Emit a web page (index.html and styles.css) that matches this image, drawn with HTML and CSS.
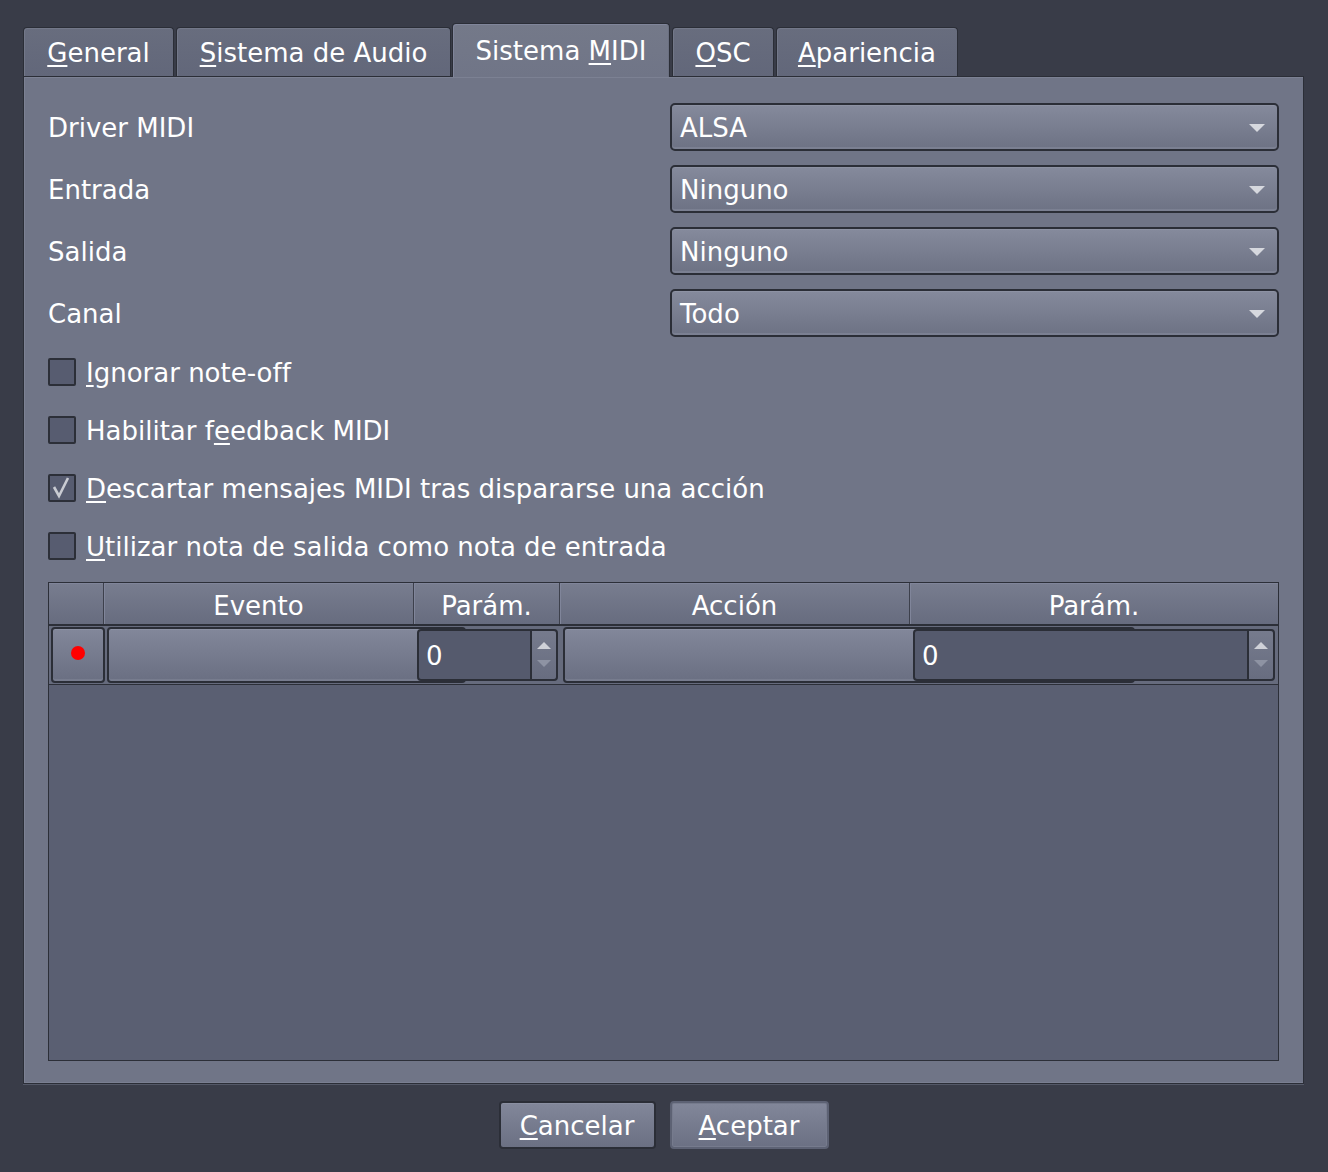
FILE: index.html
```html
<!DOCTYPE html>
<html lang="es">
<head>
<meta charset="utf-8">
<title>Preferencias</title>
<link rel="stylesheet" href="styles.css">
</head>
<body>
<div class="dialog">
  <div class="tabbar">
    <div class="tab tab-general"><span><u>G</u>eneral</span></div>
    <div class="tab tab-audio"><span><u>S</u>istema de Audio</span></div>
    <div class="tab tab-midi active"><span>Sistema <u>M</u>IDI</span></div>
    <div class="tab tab-osc"><span><u>O</u>SC</span></div>
    <div class="tab tab-apar"><span><u>A</u>pariencia</span></div>
  </div>
  <div class="panel">
    <div class="field"><span class="label">Driver MIDI</span><div class="combo"><span>ALSA</span><i class="arrow"></i></div></div>
    <div class="field"><span class="label">Entrada</span><div class="combo"><span>Ninguno</span><i class="arrow"></i></div></div>
    <div class="field"><span class="label">Salida</span><div class="combo"><span>Ninguno</span><i class="arrow"></i></div></div>
    <div class="field"><span class="label">Canal</span><div class="combo"><span>Todo</span><i class="arrow"></i></div></div>

    <div class="check first"><span class="box"></span><span class="ctext"><u>I</u>gnorar note-off</span></div>
    <div class="check"><span class="box"></span><span class="ctext">Habilitar f<u>e</u>edback MIDI</span></div>
    <div class="check"><span class="box"><svg width="24" height="24" viewBox="0 0 24 24"><polyline points="4,11 9,20 18,2" fill="none" stroke="#c9cbd2" stroke-width="2.6" stroke-linejoin="miter"/></svg></span><span class="ctext"><u>D</u>escartar mensajes MIDI tras dispararse una acción</span></div>
    <div class="check"><span class="box"></span><span class="ctext"><u>U</u>tilizar nota de salida como nota de entrada</span></div>

    <div class="table">
      <div class="thead">
        <div class="th th-first"></div>
        <div class="th">Evento</div>
        <div class="th">Parám.</div>
        <div class="th">Acción</div>
        <div class="th">Parám.</div>
      </div>
      <div class="trow">
        <div class="btn rec"><span class="dot"></span></div>
        <div class="btn evento"></div>
        <div class="spin spin-a"><span class="val">0</span><span class="spinbtns"><i class="up"></i><i class="down"></i></span></div>
        <div class="btn accion"></div>
        <div class="spin spin-b"><span class="val">0</span><span class="spinbtns"><i class="up"></i><i class="down"></i></span></div>
      </div>
    </div>
  </div>
  <div class="buttons">
    <div class="pbtn cancel"><span><u>C</u>ancelar</span></div>
    <div class="pbtn accept"><span><u>A</u>ceptar</span></div>
  </div>
</div>
</body>
</html>
```

FILE: styles.css
```css
* { box-sizing: border-box; }
html, body { margin: 0; }
body {
  background: #393c48;
  font-family: "DejaVu Sans", "Noto Sans", sans-serif;
  font-size: 26px;
  color: #ffffff;
  width: 1328px;
  height: 1172px;
  overflow: hidden;
}
u {
  text-decoration: underline;
  text-decoration-thickness: 2px;
  text-underline-offset: 3px;
}
.dialog { padding: 23px 24px 0 23px; }

/* tabs */
.tabbar {
  display: flex;
  align-items: flex-end;
  height: 53px;
  position: relative;
  z-index: 2;
}
.tab {
  height: 49px;
  border: 1px solid #2b2e37;
  border-bottom: none;
  border-radius: 4px 4px 0 0;
  background: linear-gradient(#686d7e, #62677a);
  box-shadow: inset 1px 1px 0 #737889;
  display: flex;
  align-items: center;
  justify-content: center;
  padding-top: 2px;
  line-height: 1;
}
.tab-general { width: 151px; }
.tab-audio { width: 275px; margin-left: 2px; }
.tab-midi { width: 218px; margin-left: 1px; }
.tab-osc { width: 102px; margin-left: 2px; }
.tab-apar { width: 182px; margin-left: 2px; }
.tab.active {
  height: 54px;
  margin-bottom: -1px;
  padding-top: 0;
  padding-bottom: 0;
  background: linear-gradient(#747989, #707587);
  box-shadow: inset 1px 1px 0 #80859a, inset -1px 0 0 #6a6f80;
}

/* panel */
.panel {
  position: relative;
  z-index: 1;
  border: 1px solid #2b2e37;
  background: #707587;
  box-shadow: inset 1px 1px 0 #7c8193, inset 0 -1px 0 #7a7f91, 0 1px 0 #545867;
  padding: 26px 24px 22px 24px;
  display: flex;
  flex-direction: column;
  gap: 14px;
}
.field {
  display: grid;
  grid-template-columns: 1fr 609px;
  align-items: center;
  height: 48px;
}
.label { padding-top: 2px; }
.combo {
  height: 48px;
  border: 2px solid #2b2e37;
  border-radius: 5px;
  background: linear-gradient(#858a9c, #6d7284);
  box-shadow: inset 0 1px 0 #8d92a3, inset 0 -2px 0 #7b8092;
  display: flex;
  align-items: center;
  padding: 2px 12px 0 8px;
  justify-content: space-between;
}
.arrow {
  width: 0;
  height: 0;
  border-left: 8px solid transparent;
  border-right: 8px solid transparent;
  border-top: 8px solid #d6d8de;
  margin-top: -1px;
}

/* checkboxes */
.check {
  height: 44px;
  display: flex;
  align-items: center;
  gap: 10px;
}
.check.first { margin-top: -1px; }
.ctext { padding-top: 2px; }
.box {
  width: 28px;
  height: 28px;
  border: 2px solid #2c2f38;
  border-radius: 2px;
  background: #575c70;
  display: flex;
  align-items: center;
  justify-content: center;
  flex: none;
}
.box svg { display: block; }

/* table */
.table {
  height: 479px;
  border: 1px solid #2c2f38;
  background: #5a5f72;
}
.thead {
  display: grid;
  grid-template-columns: 54px 310px 146px 350px 1fr;
  height: 43px;
  border-bottom: 2px solid #2c2f38;
}
.th {
  background: linear-gradient(#787d8f, #676c7f);
  border-left: 1px solid #3d404c;
  box-shadow: inset 1px 0 0 #80859a, inset 0 1px 0 #80859a;
  display: flex;
  align-items: center;
  justify-content: center;
  padding-top: 4px;
}
.th-first { border-left: none; box-shadow: inset 0 1px 0 #80859a; }
.trow {
  display: flex;
  align-items: center;
  height: 59px;
  border-bottom: 1px solid #2c2f38;
  background: #666b7d;
  padding-left: 2px;
  padding-bottom: 1px;
}
.btn {
  height: 56px;
  border: 2px solid #2b2e37;
  border-radius: 4px;
  background: linear-gradient(#82879a, #6a6f82);
  box-shadow: inset 0 1px 0 #8b90a2, inset 0 -2px 0 #777c8e;
  flex: none;
}
.rec {
  width: 54px;
  display: flex;
  align-items: center;
  justify-content: center;
}
.dot {
  width: 14px;
  height: 14px;
  border-radius: 50%;
  background: #ff0000;
  margin-top: -3px;
}
.evento { width: 359px; margin-left: 2px; }
.accion { width: 572px; margin-left: 5px; }
.spin {
  position: relative;
  z-index: 1;
  height: 52px;
  border: 2px solid #2b2e37;
  border-radius: 4px;
  background: #555a6d;
  display: flex;
  align-items: stretch;
  flex: none;
}
.spin-a { width: 141px; margin-left: -49px; }
.spin-b { width: 362px; margin-left: -222px; }
.val {
  flex: 1;
  display: flex;
  align-items: center;
  padding-left: 7px;
  padding-top: 2px;
}
.spinbtns {
  width: 26px;
  border-left: 2px solid #2b2e37;
  background: linear-gradient(#767b8d, #686d80);
  border-radius: 0 3px 3px 0;
  display: flex;
  flex-direction: column;
  align-items: center;
  justify-content: space-evenly;
}
.up {
  width: 0; height: 0;
  border-left: 7px solid transparent;
  border-right: 7px solid transparent;
  border-bottom: 7px solid #cfd1d8;
}
.down {
  width: 0; height: 0;
  border-left: 7px solid transparent;
  border-right: 7px solid transparent;
  border-top: 7px solid #8e93a3;
}

/* buttons */
.buttons {
  display: flex;
  justify-content: center;
  gap: 14px;
  margin-top: 17px;
}
.pbtn {
  height: 48px;
  border: 2px solid #2b2e37;
  border-radius: 4px;
  background: linear-gradient(#82879a, #6b7083);
  box-shadow: inset 0 1px 0 #8a8fa1;
  display: flex;
  align-items: center;
  justify-content: center;
  padding-top: 2px;
}
.cancel { width: 157px; }
.accept { width: 159px; border-color: #5d6274; box-shadow: inset 0 0 0 1px #767b8d; }
```
